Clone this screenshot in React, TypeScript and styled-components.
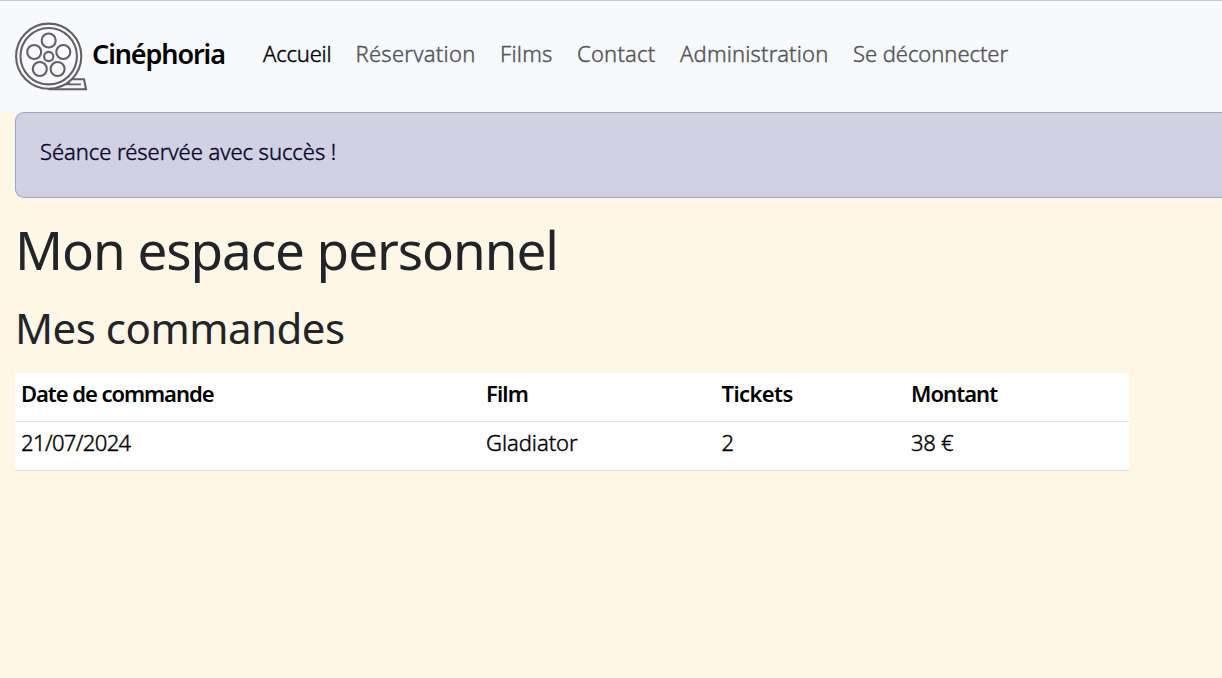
import React from "react";
import styled, { createGlobalStyle } from "styled-components";

const GlobalStyle = createGlobalStyle`
  * { box-sizing: border-box; }
  body {
    margin: 0;
    background: #fff7e6;
    color: #212529;
    font-family: "Noto Sans", sans-serif;
    font-size: 22px;
    font-weight: 300;
    line-height: 29px;
  }
`;

const Text = styled.span<{ $spacing?: number; $bold?: boolean }>`
  letter-spacing: ${(p) => p.$spacing ?? 0}px;
  font-weight: ${(p) => (p.$bold ? 600 : 300)};
  -webkit-text-stroke: ${(p) => (p.$bold ? 0 : 0.4)}px currentColor;
  white-space: nowrap;
`;

const Navbar = styled.nav`
  display: flex;
  align-items: center;
  height: 112px;
  padding: 0 15px;
  border-top: 1px solid #c9cbce;
  background: #f8f9fc;
`;

const Brand = styled.a`
  display: flex;
  align-items: center;
  width: 236px;
  padding-top: 2px;
  color: #000;
  font-size: 27px;
`;

const BrandName = styled(Text)`
  margin-left: 4px;
  padding-bottom: 8px;
`;

const Links = styled.ul`
  display: flex;
  margin: 0;
  padding: 0;
  list-style: none;
`;

const NavItem = styled.li<{ $active?: boolean; $width: number }>`
  width: ${(p) => p.$width}px;
  padding: 0 12px 7px;
  color: ${(p) => (p.$active ? "#000" : "#525457")};
`;

const Alert = styled.div`
  height: 86px;
  margin-left: 15px;
  padding: 24px;
  border: 1px solid #a4a3cb;
  border-right: 0;
  border-radius: 9px 0 0 9px;
  background: #d2d1e1;
  color: #04032c;
`;

const Main = styled.main`
  padding: 13px 15px;
`;

const Title = styled.h1`
  margin: 0;
  font-size: 53px;
  font-weight: 400;
  line-height: 78px;
  letter-spacing: -1.07px;
`;

const Subtitle = styled.h2`
  margin: 7px 0 14px 0;
  font-size: 42px;
  font-weight: 400;
  line-height: 63px;
  letter-spacing: -0.5px;
`;

const Table = styled.table`
  width: 1114px;
  table-layout: fixed;
  border-spacing: 0;
  background: #fff;
  color: #000;
`;

const Cell = styled.td`
  height: 49px;
  padding: 6px 6px 13px;
  border-bottom: 1px solid #dee2e6;
  text-align: left;
`;

const Column = styled.col<{ $width: number }>`
  width: ${(p) => p.$width}px;
`;

const holes: [number, number][] = [
  [33.7, 18.5],
  [19.2, 30],
  [48.3, 30],
  [24.8, 47],
  [42.6, 47],
];

const FilmReel = () => (
  <svg width="73" height="72" viewBox="0 0 73 72" fill="none" stroke="#626262" strokeWidth="2.1">
    <circle cx="33.7" cy="34.2" r="32.6" />
    <circle cx="33.7" cy="34.2" r="28.2" />
    <circle cx="33.7" cy="34.5" r="4.6" />
    {holes.map(([cx, cy]) => (
      <circle key={`${cx}-${cy}`} cx={cx} cy={cy} r="7" />
    ))}
    <path d="M33.7 67.2H71L69 57.3H57.5" />
    <path d="M50 62.4H66M42 65.5L55 60.5" strokeWidth="1.7" />
  </svg>
);

const links = [
  { label: "Accueil", width: 92.5, spacing: -0.2, active: true },
  { label: "Réservation", width: 144.5, spacing: 0.25 },
  { label: "Films", width: 77, spacing: 0.25 },
  { label: "Contact", width: 103, spacing: 0.2 },
  { label: "Administration", width: 173, spacing: 0.17 },
  { label: "Se déconnecter", width: 182, spacing: -0.05 },
];

const columns = [
  { label: "Date de commande", width: 465, spacing: -1.05, value: "21/07/2024", valueSpacing: -0.62 },
  { label: "Film", width: 235.5, spacing: -0.85, value: "Gladiator", valueSpacing: -0.05 },
  { label: "Tickets", width: 189.5, spacing: -0.6, value: "2", valueSpacing: 0 },
  { label: "Montant", width: 224, spacing: -0.95, value: "38 €", valueSpacing: -0.3 },
];

export default function App() {
  return (
    <>
      <GlobalStyle />
      <Navbar>
        <Brand>
          <FilmReel />
          <BrandName $bold $spacing={-1.1}>Cinéphoria</BrandName>
        </Brand>
        <Links>
          {links.map((l) => (
            <NavItem key={l.label} $active={l.active} $width={l.width}>
              <Text $spacing={l.spacing}>{l.label}</Text>
            </NavItem>
          ))}
        </Links>
      </Navbar>
      <Alert role="alert">
        <Text $spacing={-0.05}>Séance réservée avec succès !</Text>
      </Alert>
      <Main>
        <Title>Mon espace personnel</Title>
        <Subtitle>Mes commandes</Subtitle>
        <Table>
          <colgroup>
            {columns.map((c) => (
              <Column key={c.label} $width={c.width} />
            ))}
          </colgroup>
          <thead>
            <tr>
              {columns.map((c) => (
                <Cell as="th" key={c.label}>
                  <Text $bold $spacing={c.spacing}>{c.label}</Text>
                </Cell>
              ))}
            </tr>
          </thead>
          <tbody>
            <tr>
              {columns.map((c) => (
                <Cell key={c.label}>
                  <Text $spacing={c.valueSpacing}>{c.value}</Text>
                </Cell>
              ))}
            </tr>
          </tbody>
        </Table>
      </Main>
    </>
  );
}
